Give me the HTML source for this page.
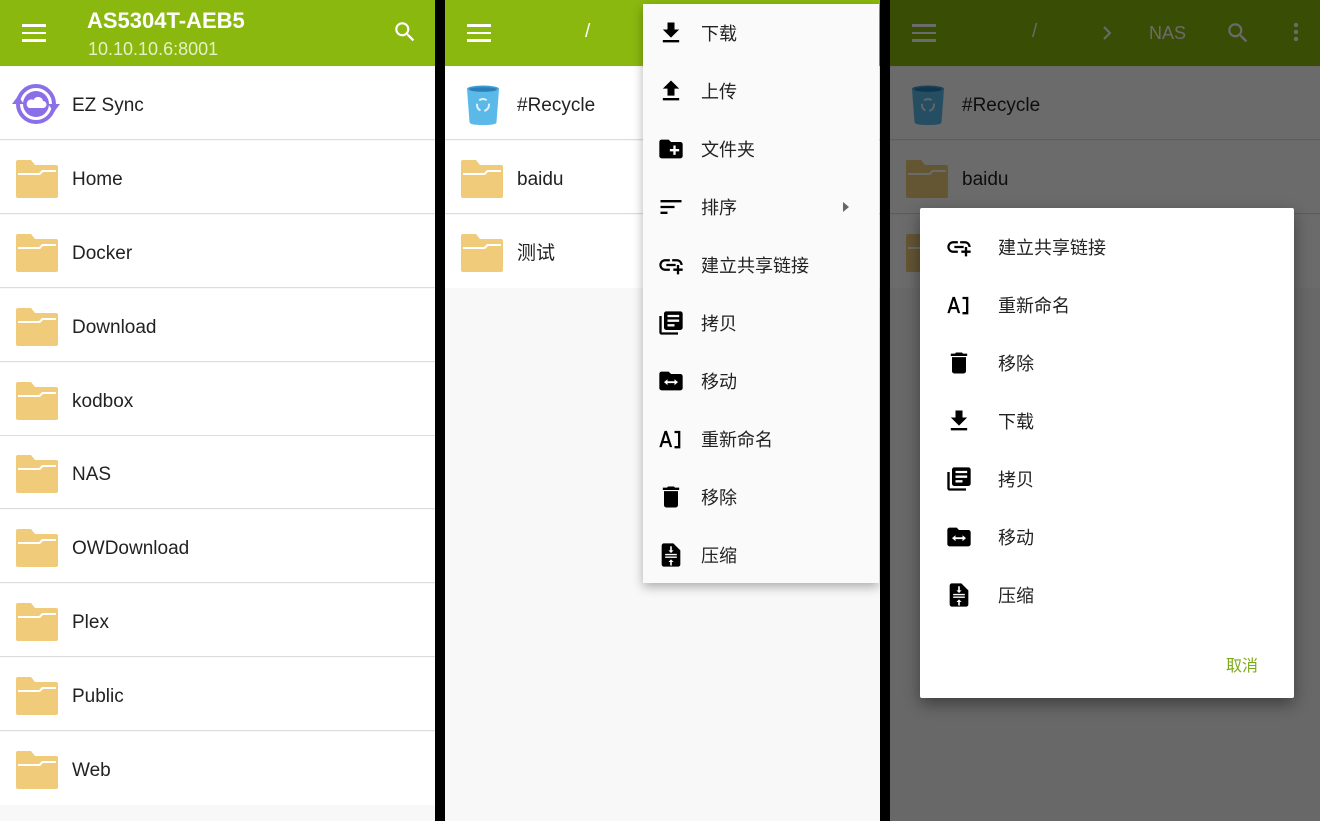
<!DOCTYPE html>
<html><head><meta charset="utf-8"><style>
*{margin:0;padding:0;box-sizing:border-box}
body{width:1320px;height:821px;background:#000;position:relative;overflow:hidden;font-family:"Liberation Sans","Noto Sans CJK SC",sans-serif;color:#212121}
.panel{position:absolute;top:0;height:821px;background:#f8f8f8;overflow:hidden}
.hdr{position:absolute;left:0;top:0;right:0;height:66px;background:#8ab80e}
.row{position:absolute;left:0;right:0;height:73px;background:#fff;border-bottom:1px solid #ddd}
.row .t{position:absolute;left:72px;top:2px;line-height:73px;font-size:19px;color:#222}
.row svg.f{position:absolute;left:16px;top:19px}
.ham{position:absolute;left:22px;top:24px;width:24px;height:18px}
.ham i{display:block;height:2.5px;background:#fff;margin-bottom:5px}
.menu{position:absolute;left:643px;top:4px;width:236px;height:579px;background:#fafafa;box-shadow:0 4px 10px rgba(0,0,0,.3)}
.mi{position:absolute;left:0;height:58px;width:100%}
.mi svg{position:absolute;left:14px;top:15px}
.mi span{position:absolute;left:58px;top:1px;line-height:58px;font-size:18px;color:#222}
.dlg{position:absolute;left:920px;top:208px;width:374px;height:490px;background:#fff;box-shadow:0 6px 16px rgba(0,0,0,.4);border-radius:2px}
.di{position:absolute;left:0;height:58px;width:100%}
.di svg{position:absolute;left:25px;top:15px}
.di span{position:absolute;left:78px;top:1px;line-height:58px;font-size:18px;color:#222}
</style></head><body>
<svg width="0" height="0" style="position:absolute">
<defs>
<symbol id="fold" viewBox="0 0 42 38"><path d="M2 0h13l4 5h21a2 2 0 0 1 2 2v29a2 2 0 0 1-2 2H2a2 2 0 0 1-2-2V2a2 2 0 0 1 2-2z" fill="#efcb7a"/><path d="M2 13h21l3-3h14v2H27l-3 3H2z" fill="#fff"/></symbol>
<symbol id="dl" viewBox="0 0 24 24"><path d="M19 9h-4V3H9v6H5l7 7 7-7zM5 18v2h14v-2H5z"/></symbol>
<symbol id="ul" viewBox="0 0 24 24"><path d="M9 16h6v-6h4l-7-7-7 7h4zm-4 2h14v2H5z"/></symbol>
<symbol id="nf" viewBox="0 0 24 24"><path d="M20 6h-8l-2-2H4c-1.11 0-1.99.89-1.99 2L2 18c0 1.11.89 2 2 2h16c1.11 0 2-.89 2-2V8c0-1.11-.89-2-2-2zm-1 8h-3v3h-2v-3h-3v-2h3V9h2v3h3v2z"/></symbol>
<symbol id="sort" viewBox="0 0 24 24"><path d="M3 18h6v-2H3v2zM3 6v2h18V6H3zm0 7h12v-2H3v2z"/></symbol>
<symbol id="link" viewBox="0 0 24 24"><path d="M8 11h8v2H8zm12.1 1H22c0-2.76-2.24-5-5-5h-4v1.9h4c1.71 0 3.1 1.39 3.1 3.1zM3.9 12c0-1.71 1.39-3.1 3.1-3.1h4V7H7c-2.76 0-5 2.24-5 5s2.24 5 5 5h4v-1.9H7c-1.71 0-3.1-1.39-3.1-3.1zM19 12h-2v3h-3v2h3v3h2v-3h3v-2h-3z"/></symbol>
<symbol id="copy" viewBox="0 0 24 24"><path d="M4 6H2v14c0 1.1.9 2 2 2h14v-2H4V6zm16-4H8c-1.1 0-2 .9-2 2v12c0 1.1.9 2 2 2h12c1.1 0 2-.9 2-2V4c0-1.1-.9-2-2-2zm-1 9H9V9h10v2zm-4 4H9v-2h6v2zm4-8H9V5h10v2z"/></symbol>
<symbol id="move" viewBox="0 0 24 24"><path d="M20 6h-8l-2-2H4c-1.1 0-2 .9-2 2v12c0 1.1.9 2 2 2h16c1.1 0 2-.9 2-2V8c0-1.1-.9-2-2-2z"/><path d="M6 13l3-2.5v1.7h6v-1.7l3 2.5-3 2.5v-1.7H9v1.7z" fill="#fff"/></symbol>
<symbol id="ren" viewBox="0 0 24 24"><path d="M2 19L6.5 5h2L13 19h-2l-1.1-3.5H5.1L4 19zm3.7-5.3h3.6L7.5 7.8zM15 5h5v15h-5v-2h3V7h-3z"/></symbol>
<symbol id="del" viewBox="0 0 24 24"><path d="M6 19c0 1.1.9 2 2 2h8c1.1 0 2-.9 2-2V7H6v12zM19 4h-3.5l-1-1h-5l-1 1H5v2h14V4z"/></symbol>
<symbol id="zip" viewBox="0 0 24 24"><path d="M14 2H6c-1.1 0-2 .9-2 2v16c0 1.1.9 2 2 2h12c1.1 0 2-.9 2-2V8l-6-6z"/><path d="M7 11h10v1.2H7zm0 2.3h10v1.2H7zM12 10.3L9.8 8h1.5V4.5h1.4V8h1.5zm0 5.4l2.2 2.3h-1.5v3h-1.4v-3H9.8z" fill="#fff"/></symbol>
<symbol id="bin" viewBox="0 0 34 40"><ellipse cx="17" cy="4" rx="16" ry="3.5" fill="#3f9fd8"/><path d="M1 4h32l-2.5 33c0 2-3 3-13.5 3S4 39 3.5 37z" fill="#5bb9ea"/><ellipse cx="17" cy="4.5" rx="14" ry="2.3" fill="#2a7fb8"/><circle cx="17" cy="20" r="6" fill="none" stroke="#dff2fc" stroke-width="2" stroke-dasharray="8 4"/></symbol>
</defs></svg>

<!-- Panel 1 -->
<div class="panel" style="left:0;width:435px">
<div class="hdr">
<div class="ham"><i></i><i></i><i></i></div>
<div style="position:absolute;left:87px;top:8px;font-size:22px;font-weight:bold;color:#fff">AS5304T-AEB5</div>
<div style="position:absolute;left:88px;top:39px;font-size:18px;color:#e6f0c8">10.10.10.6:8001</div>
<svg style="position:absolute;left:392px;top:19px" width="26" height="26" viewBox="0 0 24 24"><path fill="#fff" d="M15.5 14h-.79l-.28-.27A6.47 6.47 0 0 0 16 9.5 6.5 6.5 0 1 0 9.5 16c1.61 0 3.09-.59 4.23-1.57l.27.28v.79l5 4.99L20.49 19l-4.99-5zm-6 0C7.010 14 5 11.99 5 9.5S7.01 5 9.5 5 14 7.01 14 9.5 11.99 14 9.5 14z"/></svg>
</div>
<div class="row" style="top:67px"><svg style="position:absolute;left:10px;top:14px" width="52" height="46" viewBox="0 0 52 46"><circle cx="26" cy="23" r="18" fill="none" stroke="#8b6fe8" stroke-width="4"/><path d="M2 23l6-8 6 8z" fill="#8b6fe8"/><path d="M50 23l-6 8-6-8z" fill="#8b6fe8"/><circle cx="26" cy="23" r="13" fill="#8b6fe8"/><path d="M19 27h14a3.5 3.5 0 0 0 0-7 5 5 0 0 0-9.5-1A4 4 0 0 0 19 27z" fill="#fff"/></svg><div class="t">EZ Sync</div></div>
<div class="row" style="top:141px"><svg class="f" width="42" height="38"><use href="#fold"/></svg><div class="t">Home</div></div>
<div class="row" style="top:215px"><svg class="f" width="42" height="38"><use href="#fold"/></svg><div class="t">Docker</div></div>
<div class="row" style="top:289px"><svg class="f" width="42" height="38"><use href="#fold"/></svg><div class="t">Download</div></div>
<div class="row" style="top:363px"><svg class="f" width="42" height="38"><use href="#fold"/></svg><div class="t">kodbox</div></div>
<div class="row" style="top:436px"><svg class="f" width="42" height="38"><use href="#fold"/></svg><div class="t">NAS</div></div>
<div class="row" style="top:510px"><svg class="f" width="42" height="38"><use href="#fold"/></svg><div class="t">OWDownload</div></div>
<div class="row" style="top:584px"><svg class="f" width="42" height="38"><use href="#fold"/></svg><div class="t">Plex</div></div>
<div class="row" style="top:658px"><svg class="f" width="42" height="38"><use href="#fold"/></svg><div class="t">Public</div></div>
<div class="row" style="top:732px;border-bottom:none"><svg class="f" width="42" height="38"><use href="#fold"/></svg><div class="t">Web</div></div>
</div>

<!-- Panel 2 -->
<div class="panel" style="left:445px;width:435px">
<div class="hdr">
<div class="ham"><i></i><i></i><i></i></div>
<div style="position:absolute;left:140px;top:21px;font-size:19px;color:#fff">/</div>
</div>
<div class="row" style="top:67px"><svg style="position:absolute;left:21px;top:18px" width="34" height="40"><use href="#bin"/></svg><div class="t">#Recycle</div></div>
<div class="row" style="top:141px"><svg class="f" width="42" height="38"><use href="#fold"/></svg><div class="t">baidu</div></div>
<div class="row" style="top:215px;border-bottom:none"><svg class="f" width="42" height="38"><use href="#fold"/></svg><div class="t">测试</div></div>
</div>
<div class="menu">
<div class="mi" style="top:0"><svg width="28" height="28"><use href="#dl"/></svg><span>下载</span></div>
<div class="mi" style="top:58px"><svg width="28" height="28"><use href="#ul"/></svg><span>上传</span></div>
<div class="mi" style="top:116px"><svg width="28" height="28"><use href="#nf"/></svg><span>文件夹</span></div>
<div class="mi" style="top:174px"><svg width="28" height="28"><use href="#sort"/></svg><span>排序</span><div style="position:absolute;left:200px;top:24px;border-left:6px solid #666;border-top:5px solid transparent;border-bottom:5px solid transparent"></div></div>
<div class="mi" style="top:232px"><svg width="28" height="28"><use href="#link"/></svg><span>建立共享链接</span></div>
<div class="mi" style="top:290px"><svg width="28" height="28"><use href="#copy"/></svg><span>拷贝</span></div>
<div class="mi" style="top:348px"><svg width="28" height="28"><use href="#move"/></svg><span>移动</span></div>
<div class="mi" style="top:406px"><svg width="28" height="28"><use href="#ren"/></svg><span>重新命名</span></div>
<div class="mi" style="top:464px"><svg width="28" height="28"><use href="#del"/></svg><span>移除</span></div>
<div class="mi" style="top:522px"><svg width="28" height="28"><use href="#zip"/></svg><span>压缩</span></div>
</div>

<!-- Panel 3 -->
<div class="panel" style="left:890px;width:430px">
<div class="hdr">
<div class="ham"><i></i><i></i><i></i></div>
<div style="position:absolute;left:142px;top:21px;font-size:19px;color:#fff">/</div>
<svg style="position:absolute;left:212px;top:25px" width="10" height="16" viewBox="0 0 10 16"><path d="M2 2l6 6-6 6" fill="none" stroke="#fff" stroke-width="2"/></svg>
<div style="position:absolute;left:259px;top:23px;font-size:18px;color:#fff">NAS</div>
<svg style="position:absolute;left:335px;top:20px" width="26" height="26" viewBox="0 0 24 24"><path fill="#fff" d="M15.5 14h-.79l-.28-.27A6.47 6.47 0 0 0 16 9.5 6.5 6.5 0 1 0 9.5 16c1.61 0 3.09-.59 4.23-1.57l.27.28v.79l5 4.99L20.49 19l-4.99-5zm-6 0C7.01 14 5 11.99 5 9.5S7.01 5 9.5 5 14 7.010 14 9.5 11.99 14 9.5 14z"/></svg>
<svg style="position:absolute;left:394px;top:20px" width="24" height="24" viewBox="0 0 24 24"><circle cx="12" cy="5" r="2.2" fill="#fff"/><circle cx="12" cy="12" r="2.2" fill="#fff"/><circle cx="12" cy="19" r="2.2" fill="#fff"/></svg>
</div>
<div class="row" style="top:67px"><svg style="position:absolute;left:21px;top:18px" width="34" height="40"><use href="#bin"/></svg><div class="t">#Recycle</div></div>
<div class="row" style="top:141px"><svg class="f" width="42" height="38"><use href="#fold"/></svg><div class="t">baidu</div></div>
<div class="row" style="top:215px;border-bottom:none"><svg class="f" width="42" height="38"><use href="#fold"/></svg><div class="t">测试</div></div>
<div style="position:absolute;inset:0;background:rgba(0,0,0,.58)"></div>
</div>
<div class="dlg">
<div class="di" style="top:10px"><svg width="28" height="28"><use href="#link"/></svg><span>建立共享链接</span></div>
<div class="di" style="top:68px"><svg width="28" height="28"><use href="#ren"/></svg><span>重新命名</span></div>
<div class="di" style="top:126px"><svg width="28" height="28"><use href="#del"/></svg><span>移除</span></div>
<div class="di" style="top:184px"><svg width="28" height="28"><use href="#dl"/></svg><span>下载</span></div>
<div class="di" style="top:242px"><svg width="28" height="28"><use href="#copy"/></svg><span>拷贝</span></div>
<div class="di" style="top:300px"><svg width="28" height="28"><use href="#move"/></svg><span>移动</span></div>
<div class="di" style="top:358px"><svg width="28" height="28"><use href="#zip"/></svg><span>压缩</span></div>
<div style="position:absolute;left:306px;top:444px;font-size:16px;color:#7cab1a">取消</div>
</div>
</body></html>
